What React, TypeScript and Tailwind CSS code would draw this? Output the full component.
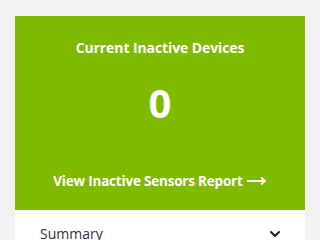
import React from 'react';
import { ChevronDown } from 'lucide-react';

const App: React.FC = () => {
  return (
    <div className="min-h-screen bg-[#f2f2f2] px-[15px] pt-[16px]" style={{ fontFamily: '"Open Sans", "Noto Sans", sans-serif' }}>
      <div className="w-[290px]">
        {/* Green tile */}
        <div className="h-[194px] bg-[#7fba00] flex flex-col items-center text-white">
          <div className="pt-[23px] text-[14px] leading-[18px] font-bold tracking-[-0.1px]">
            Current Inactive Devices
          </div>
          <div className="mt-[22px] text-[40px] leading-[48px] font-bold">0</div>
          <a href="#" className="mt-[45px] text-[13.5px] leading-[18px] font-bold tracking-[-0.2px] flex items-center gap-[4px]">
            View Inactive Sensors Report
            <svg width="20" height="10" viewBox="0 0 20 10" fill="none" stroke="white" strokeWidth="1.8">
              <path d="M0 5h18M14 1.5l4 3.5-4 3.5" />
            </svg>
          </a>
        </div>

        {/* Summary row */}
        <div className="bg-white h-[30px] overflow-hidden flex items-start justify-between pl-[25px] pr-[22px] pt-[14px]">
          <span className="text-[14px] leading-[20px] text-[#333]">Summary</span>
          <ChevronDown size={16} strokeWidth={3} className="mt-[2px] text-[#222]" />
        </div>
      </div>
    </div>
  );
};

export default App;
